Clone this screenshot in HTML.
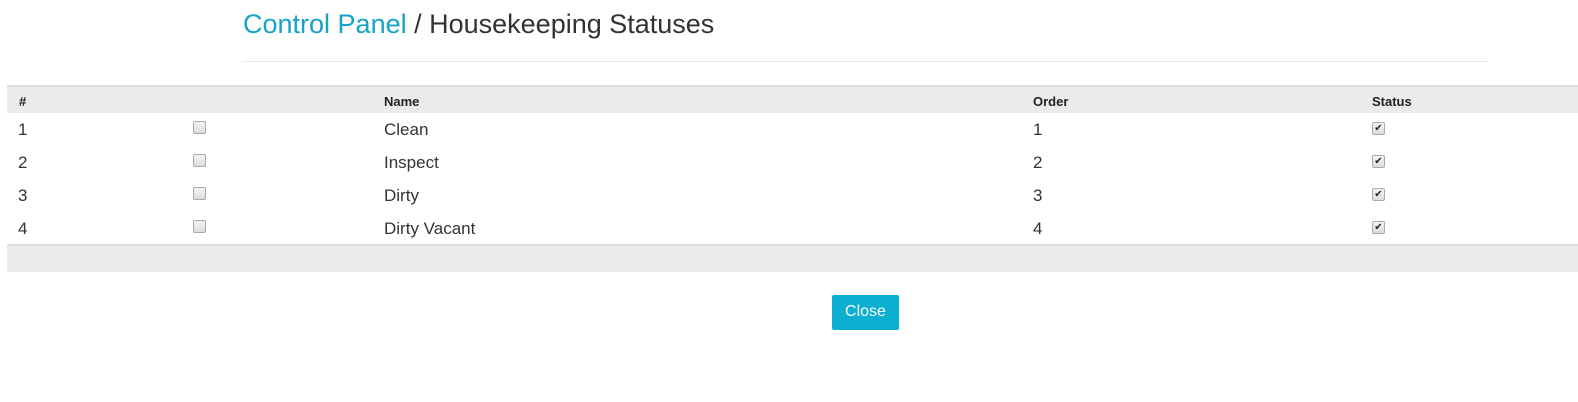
<!DOCTYPE html>
<html><head><style>
body{margin:0;width:1578px;height:402px;background:#fff;font-family:"Liberation Sans",sans-serif;color:#333;position:relative;overflow:hidden}
.a{position:absolute;white-space:nowrap}
.title{left:243px;top:9px;font-size:27px;color:#333}
.title span{color:#17a2c7}
.hr{left:242px;top:61px;width:1246px;height:1px;background:#e8e8e8}
.band{left:7px;width:1571px;background:#ebebeb}
.th{font-size:13px;font-weight:bold;top:94px;color:#222}
.td{font-size:17px;color:#333}
.cb{width:11px;height:11px;border:1px solid #aaa;border-radius:2px;background:linear-gradient(#f4f4f4,#dcdcdc)}
.ck{font-size:10px;line-height:11px;text-align:center;color:#222}
.btn{left:832px;top:295px;width:67px;height:35px;background:#0bb0d0;border-radius:2px;color:#fff;font-size:16px;text-align:center;line-height:34px}
</style></head><body>
<div class="a title"><span>Control Panel</span> / Housekeeping Statuses</div>
<div class="a hr"></div>
<div class="a band" style="top:85px;height:28px;border-top:2px solid #ddd;box-sizing:border-box"></div>
<div class="a th" style="left:19px">#</div>
<div class="a th" style="left:384px">Name</div>
<div class="a th" style="left:1033px">Order</div>
<div class="a th" style="left:1372px">Status</div>

<div class="a td" style="left:18px;top:120px">1</div><div class="a cb" style="left:193px;top:121px"></div><div class="a td" style="left:384px;top:120px">Clean</div><div class="a td" style="left:1033px;top:120px">1</div><div class="a cb ck" style="left:1372px;top:122px">✔</div>
<div class="a td" style="left:18px;top:153px">2</div><div class="a cb" style="left:193px;top:154px"></div><div class="a td" style="left:384px;top:153px">Inspect</div><div class="a td" style="left:1033px;top:153px">2</div><div class="a cb ck" style="left:1372px;top:155px">✔</div>
<div class="a td" style="left:18px;top:186px">3</div><div class="a cb" style="left:193px;top:187px"></div><div class="a td" style="left:384px;top:186px">Dirty</div><div class="a td" style="left:1033px;top:186px">3</div><div class="a cb ck" style="left:1372px;top:188px">✔</div>
<div class="a td" style="left:18px;top:219px">4</div><div class="a cb" style="left:193px;top:220px"></div><div class="a td" style="left:384px;top:219px">Dirty Vacant</div><div class="a td" style="left:1033px;top:219px">4</div><div class="a cb ck" style="left:1372px;top:221px">✔</div>

<div class="a band" style="top:244px;height:28px;border-top:2px solid #ddd;box-sizing:border-box"></div>
<div class="a btn">Close</div>
</body></html>
